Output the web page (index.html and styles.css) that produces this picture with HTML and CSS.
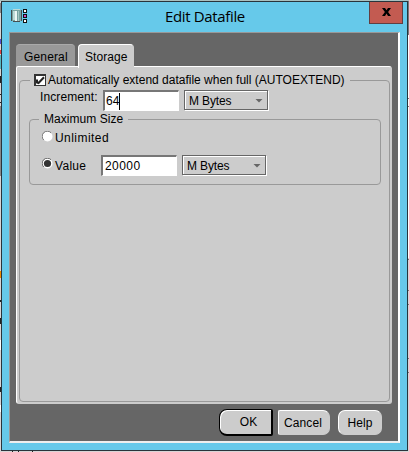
FILE: index.html
```html
<!DOCTYPE html>
<html lang="en">
<head>
<meta charset="utf-8">
<title>Edit Datafile</title>
<link rel="stylesheet" href="styles.css">
</head>
<body>
<div class="backdrop">
  <svg class="edges" width="409" height="452" shape-rendering="crispEdges">
    <path fill="#a9c0bf" d="M0 0h409v1H0z"/>
    <path fill="#d8d5d6" d="M0 451h409v1H0zM408 130h1v321h-1zM0 1h1v450H0z"/>
    <path fill="#777" d="M408 1h1v34h-1zM408 98h1v1h-1zM408 106h1v1h-1zM408 259h1v1h-1zM408 290h1v1h-1zM408 304h1v1h-1zM408 358h1v1h-1zM408 372h1v1h-1z"/>
    <path fill="#fff" d="M408 44h1v20h-1zM408 130h1v128h-1zM0 340h1v10H0zM0 405h1v7H0z"/>
    <path fill="#222" d="M0 76h1v7H0zM0 94h1v1H0zM0 102h1v1H0zM0 300h1v2H0zM0 318h1v6H0zM0 387h1v5H0zM12 451h1v1h-1zM18 451h1v1h-1zM32 451h1v1h-1z"/>
    <path fill="#888" d="M0 3h1v10H0zM0 106h1v70H0z"/>
    <path fill="#5550d0" d="M0 39h1v5H0z"/><path fill="#e54545" d="M0 50h1v4H0z"/>
    <path fill="#55b8c0" d="M0 55h1v14H0z"/><path fill="#f08b00" d="M0 271h1v7H0z"/>
  </svg>
  <div class="window">
    <header class="titlebar">
      <svg class="app-icon" width="17" height="16" shape-rendering="crispEdges">
        <path fill="#454f51" d="M2 1h7v1h2v11H9v1H2v-1H0V2h2z"/>
        <path fill="#79a4a2" d="M1 2h9v11H1z"/>
        <path fill="#bdd9d6" d="M2 1h7v1H2zM2 3h2v9H2z"/>
        <path fill="#eef8f6" d="M4 3h2v10H4z"/>
        <path fill="#a7c8c5" d="M7 3h1v10H7z"/>
        <path fill="#111" d="M12 1h4v4h-4zM12 6h4v4h-4zM12 11h4v4h-4z"/>
        <path fill="#fff" d="M13 2h2v2h-2zM13 12h2v2h-2z"/>
        <path fill="#d04bc2" d="M13 7h2v2h-2z"/>
      </svg>
      <h1 class="title">Edit Datafile</h1>
      <button class="close" aria-label="Close">
        <svg width="9" height="8"><path d="M0 0h3l1.5 2.3L6 0h3L6.1 3.9 9 8H6L4.5 5.6 3 8H0l2.9-4.1z"/></svg>
      </button>
    </header>
    <main class="client">
      <nav class="tabs">
        <div class="tab general"><span>General</span></div>
        <div class="tab storage"><span>Storage</span></div>
      </nav>
      <section class="panel">
        <fieldset class="group extend">
          <legend class="auto-legend">
            <svg width="12" height="12" shape-rendering="crispEdges"><path fill="#333" d="M0 0h12v12H0z"/><path fill="#fff" d="M2 2h9v9H2z"/><path fill="none" stroke="#222" stroke-width="2" shape-rendering="auto" d="M3 5.5v3L4.5 9 10 3.2"/></svg>
            <span class="auto-text">Automatically extend datafile when full (AUTOEXTEND)</span>
          </legend>
          <div class="row increment">
            <span class="increment-text">Increment:</span>
            <div class="field">64<i class="caret"></i></div>
            <div class="select"><span>M Bytes</span><i class="arrow"></i></div>
          </div>
          <fieldset class="group maximum">
            <legend class="max-legend">Maximum Size</legend>
            <div class="row unlimited">
              <svg class="radio" width="11" height="11"><circle cx="5.5" cy="5.5" r="5" fill="#fff"/><path fill="none" stroke="#777" d="M1.7 9A5 5 0 0 1 9 1.7"/></svg>
              <span class="unlimited-text">Unlimited</span>
            </div>
            <div class="row value">
              <svg class="radio" width="11" height="11"><circle cx="5.5" cy="5.5" r="5" fill="#fff"/><path fill="none" stroke="#666" d="M1.7 9A5 5 0 0 1 9 1.7"/><circle cx="5.5" cy="5.5" r="3.6" fill="#333"/></svg>
              <span class="value-text">Value</span>
              <div class="field number">20000</div>
              <div class="select"><span>M Bytes</span><i class="arrow"></i></div>
            </div>
          </fieldset>
        </fieldset>
      </section>
      <footer class="actions">
        <button class="button ok">OK</button>
        <button class="button cancel">Cancel</button>
        <button class="button help">Help</button>
      </footer>
    </main>
  </div>
</div>
</body>
</html>
```
FILE: styles.css
```css
* { box-sizing: border-box; }
body { margin: 0; overflow: hidden; font: 12px/14px "Liberation Sans", Arial, sans-serif; color: #000; }
button { margin: 0; padding: 0; font: inherit; color: inherit; }
svg { display: block; flex: none; }
span { white-space: nowrap; }
.backdrop { position: relative; width: 409px; height: 452px; padding: 1px; }
.edges { position: absolute; inset: 0; }
.window { position: relative; width: 407px; height: 450px; padding: 0 7px; border: 1px solid #29343b; background: #66c9ea; }
.titlebar { position: relative; display: flex; height: 30px; }
.app-icon { margin: 6px 0 0 2px; }
.title { flex: 1; margin: 4px 0 0 137px; font: 15px/20px "Open Sans", sans-serif; letter-spacing: -.35px; white-space: nowrap; }
.close { display: flex; justify-content: center; align-items: center; width: 34px; height: 22px; margin-right: -3px; padding-bottom: 1px; border: 1px solid #623e40; border-top: 0; background: #c35b51; }
.client { width: 391px; height: 411px; padding: 11px 6px 0; background: #666; border: 1px solid #999; border-right: 2px solid #fff; border-bottom: 2px solid #eee; }
.tabs { display: flex; align-items: flex-end; gap: 3px; height: 22px; }
.tab { height: 22px; padding: 5px 0 0 8px; border-top: 1px solid #aaa; border-radius: 4px 4px 0 0; }
.general { width: 59px; background: #999; }
.storage { position: relative; width: 56px; height: 24px; margin-bottom: -2px; background: #ccc; border: 1px solid #fff; border-right-color: #ccc; border-bottom: 0; padding-left: 6px; }
.general span { letter-spacing: .15px; }
.storage span { letter-spacing: .05px; }
.panel { width: 376px; height: 338px; padding: 7px 2px 2px; background: #ccc; border: 1px solid #fff; border-right-color: #ccc; border-bottom-color: #ccc; border-radius: 2px 3px 3px 3px; }
.group { min-width: 0; margin: 0; padding: 0; border: 1px solid #999; border-radius: 4px; }
.extend { width: 371px; height: 328px; }
.extend > legend { height: 12px; padding: 0 5px 0 4px; margin-left: 10px; }
.auto-legend { display: flex; align-items: center; gap: 2px; }
.auto-text { letter-spacing: 0; }
.row { display: flex; }
.increment { height: 21px; margin-top: 4px; }
.increment-text { width: 83px; padding: 0 0 0 20px; letter-spacing: .1px; }
.field { display: flex; align-items: center; width: 76px; height: 21px; padding-left: 1px; background: #fff; border: 1px solid #fff; border-top: 2px solid #777; border-left: 2px solid #777; }
.number { padding-left: 2px; letter-spacing: .45px; }
.caret { width: 1px; height: 17px; background: #000; }
.select { display: flex; align-items: center; justify-content: space-between; width: 84px; height: 20px; margin-left: 5px; padding: 1px 4px 0 4px; border: 1px solid #666; box-shadow: inset 1px 1px #fff, 1px 1px #fff; }
.select span { letter-spacing: -.15px; }
.arrow { width: 8px; height: 4px; background: #666; clip-path: polygon(0 0, 100% 0, 50% 100%); }
.maximum { width: 352px; height: 73px; margin: 1px 0 0 9px; }
.max-legend { height: 14px; padding: 0 5px; margin-left: 9px; letter-spacing: .05px; }
.radio { margin-left: 12px; }
.unlimited { margin-top: 5px; }
.unlimited-text { margin-left: 2px; letter-spacing: .45px; }
.value { margin-top: 10px; }
.value .radio { margin-top: 3px; }
.value-text { width: 46px; margin-left: 2px; padding-top: 4px; letter-spacing: .3px; }
.actions { display: flex; height: 33px; padding: 5px 0 0 203px; align-items: flex-start; }
.button { height: 25px; border: 1px solid #fff; border-right-color: #ccc; border-bottom-color: #ccc; background: #ccc; letter-spacing: .1px; }
.ok { width: 54px; height: 27px; border: 1px solid #000; border-right-width: 2px; border-bottom-width: 2px; border-radius: 8px 2px 2px 8px; box-shadow: inset 1px 1px #fff; padding-left: 6px; }
.cancel { width: 52px; margin: 1px 0 0 5px; padding-right: 2px; border-radius: 2px 7px 7px 2px; }
.help { width: 44px; margin: 1px 0 0 8px; border-radius: 7px; }
```
